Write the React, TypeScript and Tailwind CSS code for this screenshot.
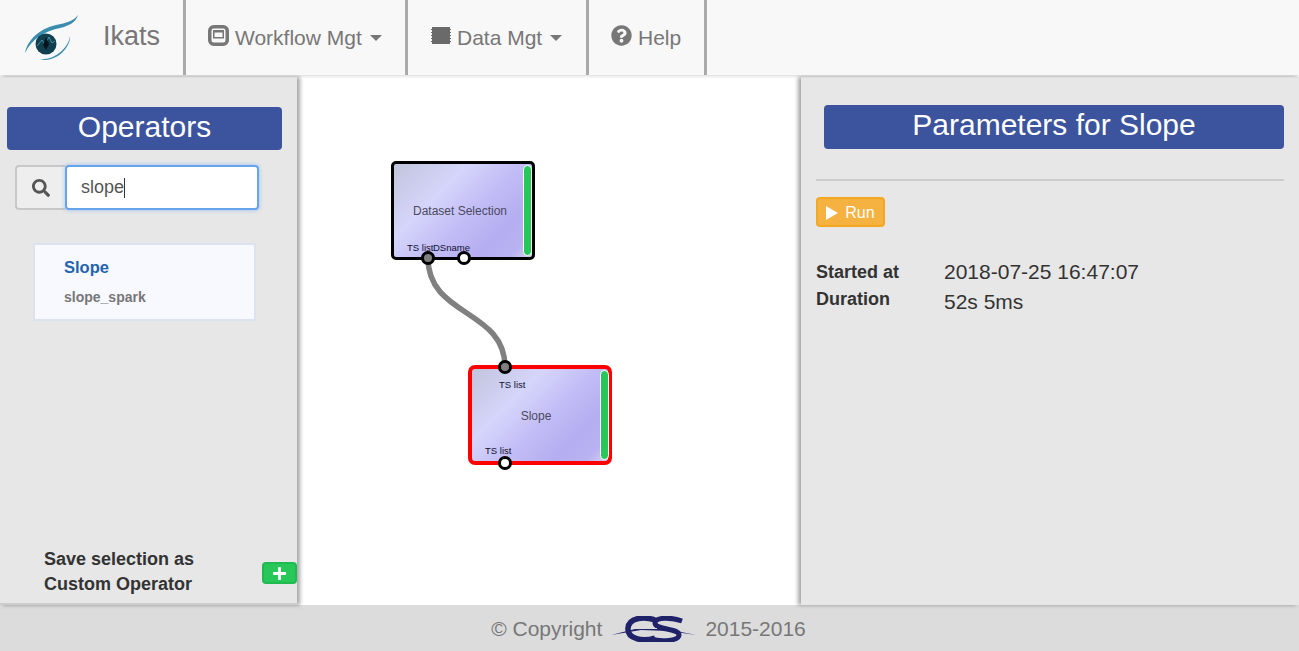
import { FaQuestionCircle, FaSearch, FaPlus } from "react-icons/fa";

const font = "font-['Liberation_Sans',Arial,sans-serif]";

const LogoEye = () => (
  <svg width="56" height="48" viewBox="0 0 56 48" className="shrink-0">
    <path d="M1 39 C4 24 18 14 32 11 C42 9 50 7 54 1 C52 8 45 12 36 14 C22 17 8 24 1 39 Z" fill="#3a8db0" />
    <path d="M15 45 C28 47 44 36 46 22 C47 33 32 50 15 45 Z" fill="#3a8db0" />
    <circle cx="22" cy="30" r="10.5" fill="#123f50" />
    <path d="M13 32 L18 26 L21 31 L25 23 L28 29 L31 27" fill="none" stroke="#4fa3bd" strokeWidth="0.8" />
    <path d="M22 23 L25 30 L22 36 L19 31 Z" fill="#05141a" />
  </svg>
);

const WorkflowIcon = () => (
  <svg width="21" height="21" viewBox="0 0 21 21" className="shrink-0 -mt-[5px]">
    <rect x="1.75" y="1.75" width="17.5" height="17.5" rx="4" fill="none" stroke="#777" strokeWidth="3.5" />
    <rect x="5.75" y="5.75" width="9.5" height="7" fill="none" stroke="#777" strokeWidth="1.5" />
    <rect x="5" y="5" width="11" height="2.5" fill="#777" />
  </svg>
);

const DataIcon = () => (
  <svg width="20" height="17" viewBox="0 0 20 17" className="shrink-0 -mt-[5px] ml-[1px]">
    <path
      d="M1 0H19V2H20V3H19V5H20V6H19V8H20V9H19V11H20V12H19V14H20V15H19V17H1V15H0V14H1V12H0V11H1V9H0V8H1V6H0V5H1V3H0V2H1Z"
      fill="#6a6a6a"
    />
  </svg>
);

const CsLogo = () => (
  <svg width="85" height="26" viewBox="0 0 85 26" className="shrink-0">
    <path d="M44 4 C32 0 18 2 17 12 C16 23 32 26 44 22" fill="none" stroke="#1f2268" strokeWidth="5.5" />
    <path d="M71 5 C60 1 44 1 44 7 C44 14 68 12 68 19 C68 25 50 26 40 23" fill="none" stroke="#1f2268" strokeWidth="5" />
    <path d="M0 19 L28 12 L58 13.5 L85 19 L58 15 L30 14 Z" fill="#1f2268" />
    <path d="M20 12.5 L46 12.5" stroke="#dcdcdc" strokeWidth="1" />
  </svg>
);

const Caret = () => (
  <span className="ml-[8px] w-0 h-0 border-x-[6px] border-x-transparent border-t-[6px] border-t-[#777777]" />
);

const NavItem = ({ width, children }: { width: string; children: React.ReactNode }) => (
  <div className={`${width} h-full flex items-center pl-[22px] border-r-[3px] border-[#aaaaaa] text-[21px] text-[#777777]`}>
    {children}
  </div>
);

const Port = ({ className }: { className: string }) => (
  <div className={`absolute w-[14px] h-[14px] rounded-full border-[3px] border-black ${className}`} />
);

const nodeBg =
  "bg-[linear-gradient(135deg,#c2c4dc_0%,#d5d5fb_32%,#c2bcf6_55%,#b5aff1_75%,#b8b2f2_90%,#d8d2ee_100%)]";

const PortLabel = ({ className, children }: { className: string; children: string }) => (
  <div className={`absolute text-[9.5px] leading-[12px] text-[#101030] ${className}`}>{children}</div>
);

const Canvas = () => (
  <div className="relative flex-1 bg-white text-[#4a4a60]">
    <svg className="absolute inset-0 w-full h-full">
      <path d="M131 181 C131 240 208 232 208 290" fill="none" stroke="#808080" strokeWidth="5.5" />
    </svg>

    <div className={`absolute left-[94px] top-[84px] w-[144px] h-[99px] rounded-[5px] border-[3px] border-black ${nodeBg}`}>
      <div className="absolute top-[1px] right-0 bottom-[1px] w-[9px] rounded-full bg-[#28c75a] border border-white" />
      <div className="absolute left-0 right-[6px] top-[39px] text-center text-xs leading-[16px]">Dataset Selection</div>
      <PortLabel className="left-[13px] top-[78px]">TS list</PortLabel>
      <PortLabel className="left-[39px] top-[78px]">DSname</PortLabel>
      <Port className="left-[27px] top-[87px] bg-[#808080]" />
      <Port className="left-[63px] top-[87px] bg-white" />
    </div>

    <div className={`absolute left-[171px] top-[288px] w-[144px] h-[100px] rounded-[7px] border-[4px] border-[#ff0000] ${nodeBg}`}>
      <div className="absolute top-[1px] right-[-1px] bottom-[1px] w-[9px] rounded-full bg-[#28c75a] border border-white" />
      <div className="absolute left-0 right-[8px] top-[39px] text-center text-xs leading-[16px]">Slope</div>
      <PortLabel className="left-[27px] top-[10px]">TS list</PortLabel>
      <PortLabel className="left-[13px] top-[76px]">TS list</PortLabel>
      <Port className="left-[26px] top-[-9px] bg-[#808080]" />
      <Port className="left-[26px] top-[87px] bg-white" />
    </div>
  </div>
);

export default function App() {
  return (
    <div className={`${font} w-[1299px] h-[651px] flex flex-col overflow-hidden bg-white`}>
      <nav className="relative z-20 h-[75px] flex items-center bg-[#f8f8f8] shadow-[0_2px_2px_rgba(0,0,0,0.1)]">
        <div className="w-[186px] h-full flex items-center pl-[24px] border-r-[3px] border-[#aaaaaa]">
          <LogoEye />
          <span className="ml-[23px] text-[27px] text-[#777777] -mt-[2px]">Ikats</span>
        </div>
        <NavItem width="w-[222px]">
          <WorkflowIcon />
          <span className="ml-[6px]">Workflow Mgt</span>
          <Caret />
        </NavItem>
        <NavItem width="w-[181px]">
          <DataIcon />
          <span className="ml-[6px]">Data Mgt</span>
          <Caret />
        </NavItem>
        <NavItem width="w-[118px]">
          <FaQuestionCircle className="text-[21px] -mt-[4px]" />
          <span className="ml-[6px]">Help</span>
        </NavItem>
      </nav>

      <div className="flex flex-1 min-h-0 pt-[2px]">
        <aside className="relative z-10 w-[297px] shrink-0 flex flex-col bg-[#e7e7e7] border-b-2 border-[#cccccc] pl-[7px] pt-[30px] shadow-[3px_0_4px_rgba(0,0,0,0.35)]">
          <h2 className="w-[275px] h-[43px] pb-[4px] flex items-center justify-center rounded bg-[#3c539d] text-[30px] text-white">
            Operators
          </h2>
          <div className="flex w-[244px] h-[45px] ml-[8px] mt-[15px]">
            <div className="w-[50px] flex items-center justify-center rounded-l border-2 border-r-0 border-[#c8c8c8] bg-[#eeeeee] text-[#555555]">
              <FaSearch className="text-[18px]" />
            </div>
            <div className="flex-1 flex items-center pl-[14px] rounded border-2 border-[#66a5ec] bg-white text-[18px] text-[#555555] shadow-[0_0_4px_rgba(102,165,236,0.6)]">
              slope
              <span className="w-px h-[20px] bg-[#333333]" />
            </div>
          </div>
          <div className="w-[223px] h-[78px] ml-[26px] mt-[33px] pl-[29px] border-2 border-[#dde3ee] bg-[#f7f9ff]">
            <div className="mt-[12px] text-[16.5px] font-bold leading-[20px] text-[#2464ae]">Slope</div>
            <div className="mt-[10px] text-sm font-bold leading-[20px] text-[#777777]">slope_spark</div>
          </div>
          <div className="flex-1" />
          <div className="flex items-end ml-[37px] mb-[6px]">
            <div className="w-[218px] shrink-0 text-lg font-bold leading-[25px] text-[#333333]">
              Save selection as
              <br />
              Custom Operator
            </div>
            <button className="w-[35px] h-[22px] shrink-0 mb-[13px] flex items-center justify-center rounded border-2 border-[#1fbb50] bg-[#28c75a] text-white">
              <FaPlus className="text-[15px]" />
            </button>
          </div>
        </aside>

        <Canvas />

        <section className="relative z-10 w-[498px] shrink-0 bg-[#e7e7e7] px-[15px] pt-[28px] text-[#333333] shadow-[-3px_0_4px_rgba(0,0,0,0.35)]">
          <h2 className="w-[460px] h-[44px] pb-[6px] ml-[8px] flex items-center justify-center rounded bg-[#3c539d] text-[30px] text-white">
            Parameters for Slope
          </h2>
          <hr className="mt-[30px] border-0 h-[2px] bg-[#cccccc]" />
          <button className="mt-[16px] w-[69px] h-[30px] pt-[1px] flex items-center justify-center gap-[7px] rounded border-2 border-[#f4a81f] bg-[#f5b240] text-base text-white">
            <svg width="12" height="14" viewBox="0 0 12 14" className="shrink-0">
              <path d="M0 0L12 7L0 14Z" fill="#ffffff" />
            </svg>
            Run
          </button>
          <div className="mt-[30px] grid grid-cols-[128px_1fr] items-start">
            <div className="text-lg font-bold leading-[30px]">Started at</div>
            <div className="text-[21px] leading-[30px]">2018-07-25 16:47:07</div>
            <div className="text-lg font-bold leading-[24px]">Duration</div>
            <div className="text-[21px] leading-[30px]">52s 5ms</div>
          </div>
        </section>
      </div>

      <footer className="h-[46px] pt-[2px] pr-[2px] flex items-center justify-center gap-[9px] bg-[#dcdcdc] text-[21px] text-[#777777]">
        <span>© Copyright</span>
        <CsLogo />
        <span>2015-2016</span>
      </footer>
    </div>
  );
}
